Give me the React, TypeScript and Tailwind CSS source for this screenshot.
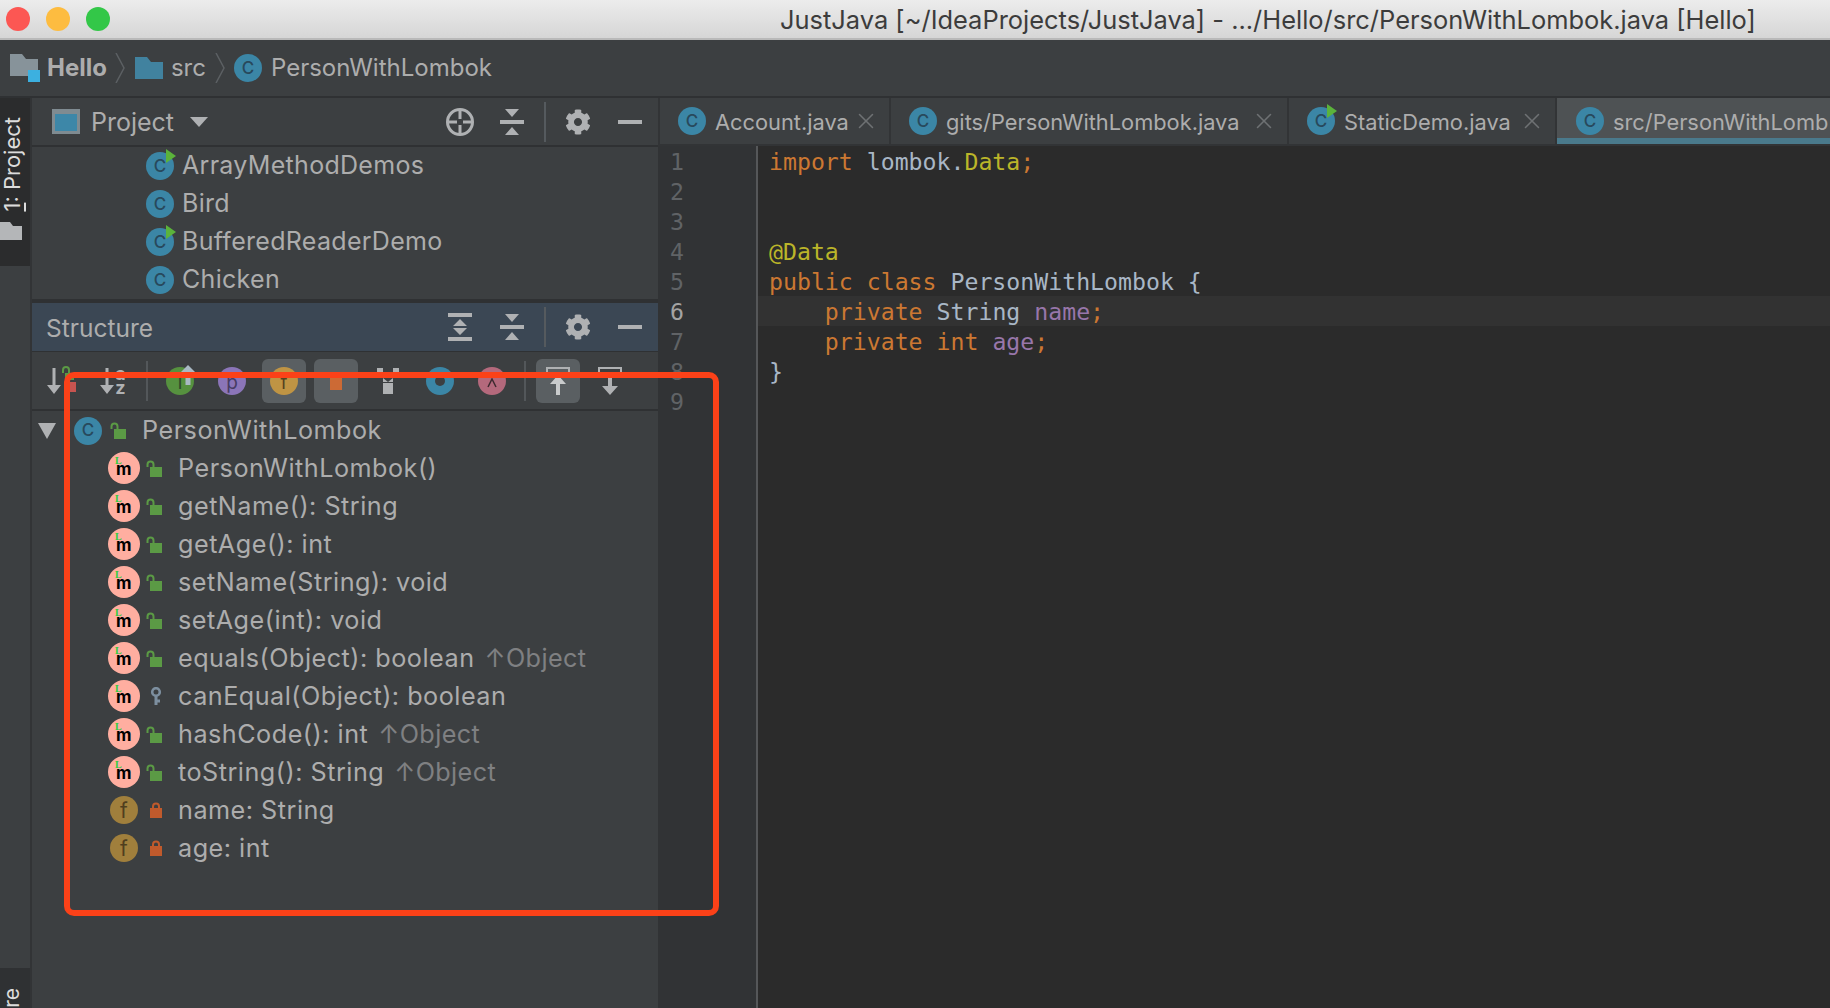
import { X } from "lucide-react";
import { FaCog } from "react-icons/fa";

const UI_FONT = "font-['Inter','Liberation_Sans',sans-serif]";

const PROJECT_FILES = [
  { name: "ArrayMethodDemos", runnable: true },
  { name: "Bird", runnable: false },
  { name: "BufferedReaderDemo", runnable: true },
  { name: "Chicken", runnable: false },
];

const MEMBERS = [
  { label: "PersonWithLombok()", kind: "public" },
  { label: "getName(): String", kind: "public" },
  { label: "getAge(): int", kind: "public" },
  { label: "setName(String): void", kind: "public" },
  { label: "setAge(int): void", kind: "public" },
  { label: "equals(Object): boolean", kind: "public", inherited: true },
  { label: "canEqual(Object): boolean", kind: "protected" },
  { label: "hashCode(): int", kind: "public", inherited: true },
  { label: "toString(): String", kind: "public", inherited: true },
  { label: "name: String", kind: "field" },
  { label: "age: int", kind: "field" },
];

const TABS = [
  { name: "Account.java", width: "w-[231px]" },
  { name: "gits/PersonWithLombok.java", width: "w-[398px]" },
  { name: "StaticDemo.java", width: "w-[268px]", runnable: true },
];

function ClassIcon({ runnable }: { runnable?: boolean }) {
  return (
    <div className="relative flex h-7 w-7 shrink-0 items-center justify-center rounded-full bg-[#3b86a6]">
      <span className="text-[17px] leading-none font-medium text-[#28495c]">C</span>
      {runnable && (
        <svg className="absolute -top-[3px] left-[20px]" width="10" height="14" viewBox="0 0 10 14">
          <path d="M0 0L10 7L0 14Z" fill="#5bb33b" />
        </svg>
      )}
    </div>
  );
}

function PublicLock() {
  return (
    <svg width="16" height="17" viewBox="0 0 16 17" className="shrink-0">
      <path d="M1.5 7V4.5a3 3 0 0 1 6 0V7" fill="none" stroke="#5b9a45" strokeWidth="2" />
      <rect x="4" y="7" width="12" height="10" fill="#5b9a45" />
    </svg>
  );
}

function PrivateLock() {
  return (
    <svg width="12" height="16" viewBox="0 0 12 16" className="ml-1 shrink-0">
      <path d="M3 7V4.5a3 3 0 0 1 6 0V7" fill="none" stroke="#c05a2c" strokeWidth="2" />
      <rect x="0" y="6" width="12" height="10" fill="#c05a2c" />
    </svg>
  );
}

function KeyIcon() {
  return (
    <svg width="12" height="18" viewBox="0 0 12 18" className="ml-1 shrink-0">
      <circle cx="6" cy="5" r="3.8" fill="none" stroke="#7d8f9f" strokeWidth="2.6" />
      <path d="M6 9V18M6 14H10" stroke="#7d8f9f" strokeWidth="3" fill="none" />
    </svg>
  );
}

function Tri({ className }: { className?: string }) {
  return (
    <svg width="18" height="10" viewBox="0 0 18 10" className={className}>
      <path d="M0 0H18L9 10Z" fill="#afb1b3" />
    </svg>
  );
}

function CollapseIcon() {
  return (
    <svg width="24" height="26" viewBox="0 0 24 26">
      <path d="M5 0H19L12 8Z M0 11H24V15H0Z M12 18L19 26H5Z" fill="#afb1b3" />
    </svg>
  );
}

function ExpandIcon() {
  return (
    <svg width="24" height="28" viewBox="0 0 24 28">
      <path d="M0 0H24V4H0Z M12 6L19 13H5Z M5 15H19L12 22Z M0 24H24V28H0Z" fill="#afb1b3" />
    </svg>
  );
}

function LocateIcon() {
  return (
    <svg width="28" height="28" viewBox="0 0 28 28">
      <circle cx="14" cy="14" r="12.5" fill="none" stroke="#afb1b3" strokeWidth="3" />
      <path d="M14 2V11M14 17V26M2 14H11M17 14H26" stroke="#afb1b3" strokeWidth="3" />
    </svg>
  );
}

function PanelActions({ first }: { first: React.ReactNode }) {
  return (
    <div className="ml-auto flex items-center gap-2 pr-[6px]">
      <div className="flex w-11 justify-center">{first}</div>
      <div className="flex w-11 justify-center">
        <CollapseIcon />
      </div>
      <div className="flex w-[6px] justify-center">
        <div className="h-10 w-[2px] bg-[#555a5e]" />
      </div>
      <div className="flex w-11 justify-center">
        <FaCog size={26} color="#afb1b3" />
      </div>
      <div className="flex w-11 justify-center">
        <div className="h-1 w-6 bg-[#afb1b3]" />
      </div>
    </div>
  );
}

function ToolSlot({ active, children }: { active?: boolean; children: React.ReactNode }) {
  return (
    <div className={`flex h-11 w-11 items-center justify-center rounded-md ${active ? "bg-[#5a5f62]" : ""}`}>
      {children}
    </div>
  );
}

function Badge({ color, text, textColor }: { color: string; text?: string; textColor?: string }) {
  return (
    <div className={`relative flex h-7 w-7 items-center justify-center rounded-full ${color}`}>
      {text && <span className={`mt-[4px] text-[19px] leading-none ${textColor}`}>{text}</span>}
    </div>
  );
}

function ArrowDown() {
  return (
    <svg width="14" height="26" viewBox="0 0 14 26">
      <path d="M5.5 0H8.5V17H14L7 26L0 17H5.5Z" fill="#afb1b3" />
    </svg>
  );
}

function MoveIcon({ dir }: { dir: "up" | "down" }) {
  return (
    <svg width="24" height="28" viewBox="0 0 24 28">
      <path d="M1 11V1H23V11" fill="none" stroke="#afb1b3" strokeWidth="2" />
      {dir === "up" ? (
        <path d="M12 8L20 17H14V28H10V17H4Z" fill="#c9cbcc" />
      ) : (
        <path d="M10 8H14V19H20L12 28L4 19H10Z" fill="#afb1b3" />
      )}
    </svg>
  );
}

function StructureToolbar() {
  return (
    <div className="flex h-[59px] items-center gap-2 border-b-2 border-[#2f3133]">
      <ToolSlot>
        <div className="relative">
          <ArrowDown />
          <svg className="absolute -top-[2px] left-[14px]" width="15" height="28" viewBox="0 0 15 28">
            <path d="M2 7V4a3 3 0 0 1 6 0V7" fill="none" stroke="#5b9a45" strokeWidth="2" />
            <rect x="4" y="7" width="9" height="7" fill="#5b9a45" />
            <rect x="6" y="16" width="9" height="10" fill="#c75450" />
          </svg>
        </div>
      </ToolSlot>
      <ToolSlot>
        <div className="ml-[14px] flex items-center gap-[1px]">
          <ArrowDown />
          <div className="flex flex-col text-[18px] leading-[14px] font-bold text-[#afb1b3]">
            <span>a</span>
            <span>z</span>
          </div>
        </div>
      </ToolSlot>
      <div className="flex w-[14px] justify-end pr-[2px]">
        <div className="h-10 w-[2px] bg-[#53575a]" />
      </div>
      <ToolSlot>
        <div className="relative">
          <Badge color="bg-[#56913f]" text="I" textColor="text-[#2f4a2b]" />
          <svg className="absolute -top-[2px] left-[14px]" width="16" height="20" viewBox="0 0 16 20">
            <path d="M8 0L16 8H10.5V20H5.5V8H0Z" fill="#a9b9c4" />
          </svg>
        </div>
      </ToolSlot>
      <ToolSlot>
        <Badge color="bg-[#8b75b8]" text="p" textColor="text-[#473c63]" />
      </ToolSlot>
      <ToolSlot active>
        <Badge color="bg-[#bf9444]" text="f" textColor="text-[#55421f]" />
      </ToolSlot>
      <ToolSlot active>
        <div className="h-[18px] w-3 bg-[#cc6a35]" />
      </ToolSlot>
      <ToolSlot>
        <svg width="22" height="26" viewBox="0 0 22 26">
          <path d="M0 0H6V10H0Z M16 0H22V10H16Z M6 10L11 14L16 10V14H6Z M6 15H16V26H6Z" fill="#afb1b3" />
        </svg>
      </ToolSlot>
      <ToolSlot>
        <div className="flex h-7 w-7 items-center justify-center rounded-full bg-[#3b86a6]">
          <div className="h-[10px] w-[10px] rounded-full bg-[#3c3f41]" />
        </div>
      </ToolSlot>
      <ToolSlot>
        <div className="flex h-7 w-7 items-center justify-center rounded-full bg-[#b4697c]">
          <svg className="mt-[5px]" width="10" height="10" viewBox="0 0 10 10">
            <path d="M1 9L5 1L9 9" fill="none" stroke="#3f2a30" strokeWidth="1.5" />
          </svg>
        </div>
      </ToolSlot>
      <div className="flex w-[6px] justify-center">
        <div className="h-10 w-[2px] bg-[#53575a]" />
      </div>
      <ToolSlot active>
        <MoveIcon dir="up" />
      </ToolSlot>
      <ToolSlot>
        <MoveIcon dir="down" />
      </ToolSlot>
    </div>
  );
}

function MemberRow({ label, kind, inherited }: { label: string; kind: string; inherited?: boolean }) {
  return (
    <div className="flex h-[38px] items-center pl-[76px]">
      <div className="flex w-8 shrink-0 justify-center">
        {kind === "field" ? (
          <div className="flex h-7 w-7 items-center justify-center rounded-full bg-[#a07f3c]">
            <span className="text-[21px] leading-none text-[#4f3e1e]">f</span>
          </div>
        ) : (
          <div className="relative h-8 w-8 rounded-full bg-[#ffaea0]">
            <span className="absolute top-[4px] left-[7px] font-['Liberation_Serif',serif] text-[10px] leading-none font-bold text-[#2ecc40]">
              L
            </span>
            <span className="absolute top-[9px] left-[8px] text-[17px] leading-none font-bold text-black">m</span>
          </div>
        )}
      </div>
      <div className="ml-[6px] flex w-4 shrink-0 justify-center">
        {kind === "public" && <PublicLock />}
        {kind === "protected" && <KeyIcon />}
        {kind === "field" && <PrivateLock />}
      </div>
      <span className="mt-[1px] ml-[16px] text-[25.2px] tracking-[0.5px] whitespace-nowrap text-[#adadad]">{label}</span>
      {inherited && <span className="mt-[1px] ml-[10px] text-[25.2px] tracking-[0.4px] whitespace-nowrap text-[#7f8082]">↑Object</span>}
    </div>
  );
}

function EditorTab({ name, width, runnable }: { name: string; width: string; runnable?: boolean }) {
  return (
    <div className={`flex h-full shrink-0 items-center border-r-2 border-[#323436] pl-[18px] ${width}`}>
      <ClassIcon runnable={runnable} />
      <span className="mt-[2px] ml-[9px] text-[21.8px] whitespace-nowrap text-[#adadad]">{name}</span>
      <X className="mr-[10px] ml-auto" size={26} strokeWidth={1.4} color="#6e7173" />
    </div>
  );
}

const K = "text-[#cc7832]";
const Y = "text-[#bbb529]";
const P = "text-[#9876aa]";

function CodeLine({ n, children }: { n: number; children?: React.ReactNode }) {
  const current = n === 6;
  return (
    <div className="flex h-[30px] items-center">
      <div
        className={`h-full w-[100px] shrink-0 border-r-2 border-[#555759] bg-[#313335] pl-[12px] leading-[32px] ${
          current ? "text-[#a4a3a3]" : "text-[#606366]"
        }`}
      >
        {n}
      </div>
      <div className={`h-full flex-1 pl-[11px] leading-[32px] whitespace-pre text-[#a9b7c6] ${current ? "bg-[#323232]" : ""}`}>
        {children}
      </div>
    </div>
  );
}

export default function App() {
  return (
    <div className={`relative flex h-[1008px] w-[1830px] flex-col overflow-hidden bg-[#3c3f41] ${UI_FONT}`}>
      {/* title bar */}
      <div className="flex h-10 shrink-0 items-center gap-4 border-b-2 border-[#b9b9b9] bg-gradient-to-b from-[#ececec] to-[#d6d6d6] pl-[6px]">
        <div className="h-6 w-6 rounded-full bg-[#fc5753]" />
        <div className="h-6 w-6 rounded-full bg-[#fdbc40]" />
        <div className="h-6 w-6 rounded-full bg-[#33c748]" />
        <span className="mt-[2px] ml-[654px] text-[25.45px] whitespace-nowrap text-[#3c3c3c]">
          JustJava [~/IdeaProjects/JustJava] - .../Hello/src/PersonWithLombok.java [Hello]
        </span>
      </div>

      {/* navigation bar */}
      <div className="flex h-[58px] shrink-0 items-center border-b-2 border-[#2f3133] pl-[10px] text-[24px] text-[#adadad]">
        <div className="relative h-7 w-[30px]">
          <svg width="28" height="22" viewBox="0 0 28 22">
            <path d="M0 0H12L16 5H28V22H0Z" fill="#87939a" />
          </svg>
          <div className="absolute top-4 left-[18px] h-3 w-3 bg-[#3cb0e0]" />
        </div>
        <span className="ml-[7px] font-bold">Hello</span>
        <svg className="mx-[8px]" width="10" height="30" viewBox="0 0 10 30">
          <path d="M1 0L9 15L1 30" fill="none" stroke="#5c6063" strokeWidth="1.5" />
        </svg>
        <svg className="ml-[2px]" width="28" height="22" viewBox="0 0 28 22">
          <path d="M0 0H12L16 5H28V22H0Z" fill="#41829f" />
        </svg>
        <span className="ml-2">src</span>
        <svg className="mx-[9px]" width="10" height="30" viewBox="0 0 10 30">
          <path d="M1 0L9 15L1 30" fill="none" stroke="#5c6063" strokeWidth="1.5" />
        </svg>
        <ClassIcon />
        <span className="ml-[9px]">PersonWithLombok</span>
      </div>

      <div className="flex min-h-0 flex-1">
        {/* left tool strip */}
        <div className="flex w-8 shrink-0 flex-col justify-between border-r-2 border-[#323436]">
          <div className="flex h-[168px] flex-col items-start bg-[#2b2c2d] pt-[19px] pl-[1px]">
            <span className="rotate-180 text-[22px] leading-[22px] whitespace-nowrap text-[#dcdcdc] [writing-mode:vertical-rl]">
              <span className="underline">1</span>: Project
            </span>
            <svg className="mt-[10px] -ml-[1px]" width="22" height="18" viewBox="0 0 22 18">
              <path d="M0 0H10L13 4H22V18H0Z" fill="#b4b6b8" />
            </svg>
          </div>
          <div className="h-10 overflow-hidden bg-[#2f3133] pt-[20px] pl-[1px]">
            <span className="block rotate-180 text-[21px] leading-[22px] text-[#dcdcdc] [writing-mode:vertical-rl]">re</span>
          </div>
        </div>

        {/* project + structure panels */}
        <div className="flex w-[626px] shrink-0 flex-col">
          <div className="flex h-[49px] shrink-0 items-center border-b-2 border-[#2f3133]">
            <div className="ml-5 h-[25px] w-7 border-[3px] border-t-[5px] border-[#7f8b91] bg-[#3d87a8]" />
            <span className="mt-[3px] ml-[11px] text-[25px] text-[#adadad]">Project</span>
            <Tri className="ml-[16px]" />
            <PanelActions first={<LocateIcon />} />
          </div>
          <div className="h-[156px] shrink-0 overflow-hidden border-b-[4px] border-[#2f3133] pl-[114px]">
            {PROJECT_FILES.map((file) => (
              <div key={file.name} className="flex h-[38px] items-center">
                <ClassIcon runnable={file.runnable} />
                <span className="ml-[8px] text-[25px] tracking-[0.3px] text-[#adadad]">{file.name}</span>
              </div>
            ))}
          </div>
          <div className="flex h-[49px] shrink-0 items-center border-b border-[#2f3133] bg-[#3b4754] pl-[14px]">
            <span className="mt-[2px] text-[24.5px] text-[#adadad]">Structure</span>
            <PanelActions first={<ExpandIcon />} />
          </div>
          <StructureToolbar />
          <div className="flex h-[38px] items-center pt-[1px] pl-[6px]">
            <svg width="18" height="16" viewBox="0 0 18 16">
              <path d="M0 0H18L9 16Z" fill="#afb1b3" />
            </svg>
            <div className="ml-[18px]">
              <ClassIcon />
            </div>
            <div className="ml-2">
              <PublicLock />
            </div>
            <span className="ml-[16px] text-[25.2px] tracking-[0.5px] text-[#adadad]">PersonWithLombok</span>
          </div>
          {MEMBERS.map((m) => (
            <MemberRow key={m.label} label={m.label} kind={m.kind} inherited={m.inherited} />
          ))}
        </div>

        {/* editor */}
        <div className="flex min-w-0 flex-1 flex-col bg-[#2b2b2b]">
          <div className="flex h-12 shrink-0 border-b-2 border-l-2 border-[#323436] bg-[#3c3f41]">
            {TABS.map((tab) => (
              <EditorTab key={tab.name} {...tab} />
            ))}
            <div className="flex min-w-0 flex-1 items-center overflow-hidden border-b-[6px] border-[#4a7a8c] bg-[#4e5254] pt-[6px] pl-[19px]">
              <ClassIcon />
              <span className="mt-[2px] ml-[9px] text-[21.8px] whitespace-nowrap text-[#adadad]">src/PersonWithLomb</span>
            </div>
          </div>
          <div className="flex flex-1 flex-col font-['DejaVu_Sans_Mono','Liberation_Mono',monospace] text-[23.2px]">
            <CodeLine n={1}>
              <span className={K}>import</span> lombok.<span className={Y}>Data</span>
              <span className={K}>;</span>
            </CodeLine>
            <CodeLine n={2} />
            <CodeLine n={3} />
            <CodeLine n={4}>
              <span className={Y}>@Data</span>
            </CodeLine>
            <CodeLine n={5}>
              <span className={K}>public class</span> PersonWithLombok {"{"}
            </CodeLine>
            <CodeLine n={6}>
              {"    "}
              <span className={K}>private</span> String <span className={P}>name</span>
              <span className={K}>;</span>
            </CodeLine>
            <CodeLine n={7}>
              {"    "}
              <span className={K}>private int</span> <span className={P}>age</span>
              <span className={K}>;</span>
            </CodeLine>
            <CodeLine n={8}>{"}"}</CodeLine>
            <CodeLine n={9} />
            <div className="w-[100px] flex-1 border-r-2 border-[#555759] bg-[#313335]" />
          </div>
        </div>
      </div>

      {/* annotation drawn on top of the screenshot */}
      <div className="pointer-events-none absolute top-[372px] left-16 h-[544px] w-[655px] rounded-[10px] border-[6px] border-[#fb4118]" />
    </div>
  );
}
